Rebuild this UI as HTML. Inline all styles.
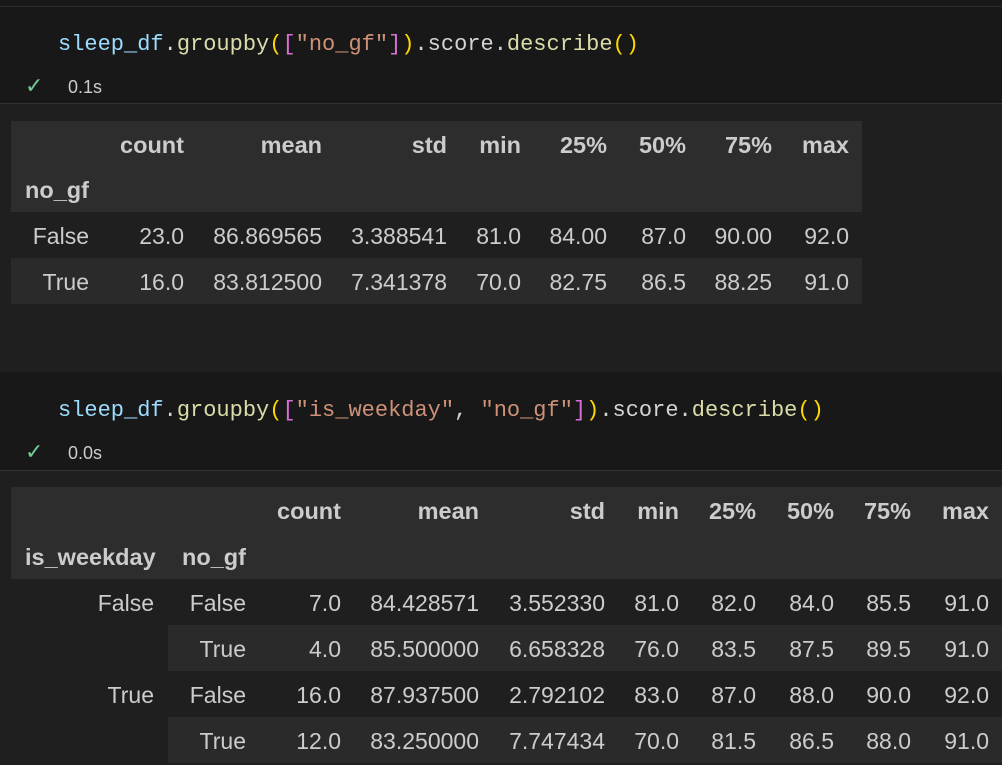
<!DOCTYPE html>
<html><head><meta charset="utf-8"><style>
*{margin:0;padding:0}
body{width:1002px;height:761px;background:#1f1f1f;position:relative;overflow:hidden;font-family:"Liberation Sans",sans-serif;color:#cccccc;font-size:23px}
.a{position:absolute;height:46px;line-height:48px;white-space:nowrap}
.b{font-weight:bold;font-size:23.5px}
.bg{position:absolute}
.code{position:absolute;font-family:"Liberation Mono",monospace;font-size:22px;white-space:pre;color:#d4d4d4}
.v{color:#9cdcfe}.f{color:#dcdcaa}.s{color:#ce9178}.y{color:#ffd700}.p{color:#da70d6}
.t{position:absolute;font-size:18px;color:#cccccc}
.ck{position:absolute;color:#73c991;font-size:22px}
</style></head><body>
<div class="bg" style="left:0;top:0;width:1002px;height:104px;background:#181818"></div>
<div class="bg" style="left:0;top:6px;width:1002px;height:1px;background:#2b2b2b"></div>
<div class="bg" style="left:0;top:103px;width:1002px;height:1px;background:#333"></div>
<div class="code" style="left:58px;top:32px"><span class="v">sleep_df</span>.<span class="f">groupby</span><span class="y">(</span><span class="p">[</span><span class="s">"no_gf"</span><span class="p">]</span><span class="y">)</span>.score.<span class="f">describe</span><span class="y">()</span></div>
<div class="ck" style="left:25px;top:73px">✓</div><div class="t" style="left:68px;top:77px">0.1s</div>

<div class="bg" style="left:11px;top:121px;width:851px;height:91px;background:#2d2d2d"></div>
<div class="bg" style="left:11px;top:258px;width:851px;height:46px;background:#2a2a2a"></div>
<div class="a b" style="right:818px;top:121px">count</div>
<div class="a b" style="right:680px;top:121px">mean</div>
<div class="a b" style="right:555px;top:121px">std</div>
<div class="a b" style="right:481px;top:121px">min</div>
<div class="a b" style="right:395px;top:121px">25%</div>
<div class="a b" style="right:316px;top:121px">50%</div>
<div class="a b" style="right:230px;top:121px">75%</div>
<div class="a b" style="right:153px;top:121px">max</div>
<div class="a b" style="left:25px;top:166px">no_gf</div>
<div class="a" style="right:913px;top:212px">False</div>
<div class="a" style="right:818px;top:212px">23.0</div>
<div class="a" style="right:680px;top:212px">86.869565</div>
<div class="a" style="right:555px;top:212px">3.388541</div>
<div class="a" style="right:481px;top:212px">81.0</div>
<div class="a" style="right:395px;top:212px">84.00</div>
<div class="a" style="right:316px;top:212px">87.0</div>
<div class="a" style="right:230px;top:212px">90.00</div>
<div class="a" style="right:153px;top:212px">92.0</div>
<div class="a" style="right:913px;top:258px">True</div>
<div class="a" style="right:818px;top:258px">16.0</div>
<div class="a" style="right:680px;top:258px">83.812500</div>
<div class="a" style="right:555px;top:258px">7.341378</div>
<div class="a" style="right:481px;top:258px">70.0</div>
<div class="a" style="right:395px;top:258px">82.75</div>
<div class="a" style="right:316px;top:258px">86.5</div>
<div class="a" style="right:230px;top:258px">88.25</div>
<div class="a" style="right:153px;top:258px">91.0</div>

<div class="bg" style="left:0;top:372px;width:1002px;height:98px;background:#181818"></div>
<div class="bg" style="left:0;top:470px;width:1002px;height:1px;background:#333"></div>
<div class="code" style="left:58px;top:398px"><span class="v">sleep_df</span>.<span class="f">groupby</span><span class="y">(</span><span class="p">[</span><span class="s">"is_weekday"</span>, <span class="s">"no_gf"</span><span class="p">]</span><span class="y">)</span>.score.<span class="f">describe</span><span class="y">()</span></div>
<div class="ck" style="left:25px;top:439px">✓</div><div class="t" style="left:68px;top:443px">0.0s</div>

<div class="bg" style="left:11px;top:487px;width:991px;height:92px;background:#2d2d2d"></div>
<div class="bg" style="left:168px;top:625px;width:834px;height:46px;background:#2a2a2a"></div>
<div class="bg" style="left:168px;top:717px;width:834px;height:46px;background:#2a2a2a"></div>
<div class="a b" style="right:661px;top:487px">count</div>
<div class="a b" style="right:523px;top:487px">mean</div>
<div class="a b" style="right:397px;top:487px">std</div>
<div class="a b" style="right:323px;top:487px">min</div>
<div class="a b" style="right:246px;top:487px">25%</div>
<div class="a b" style="right:168px;top:487px">50%</div>
<div class="a b" style="right:91px;top:487px">75%</div>
<div class="a b" style="right:13px;top:487px">max</div>
<div class="a b" style="left:25px;top:533px">is_weekday</div>
<div class="a b" style="left:182px;top:533px">no_gf</div>

<div class="a" style="right:848px;top:579px">False</div>
<div class="a" style="right:848px;top:671px">True</div>

<div class="a" style="right:756px;top:579px">False</div>
<div class="a" style="right:661px;top:579px">7.0</div>
<div class="a" style="right:523px;top:579px">84.428571</div>
<div class="a" style="right:397px;top:579px">3.552330</div>
<div class="a" style="right:323px;top:579px">81.0</div>
<div class="a" style="right:246px;top:579px">82.0</div>
<div class="a" style="right:168px;top:579px">84.0</div>
<div class="a" style="right:91px;top:579px">85.5</div>
<div class="a" style="right:13px;top:579px">91.0</div>

<div class="a" style="right:756px;top:625px">True</div>
<div class="a" style="right:661px;top:625px">4.0</div>
<div class="a" style="right:523px;top:625px">85.500000</div>
<div class="a" style="right:397px;top:625px">6.658328</div>
<div class="a" style="right:323px;top:625px">76.0</div>
<div class="a" style="right:246px;top:625px">83.5</div>
<div class="a" style="right:168px;top:625px">87.5</div>
<div class="a" style="right:91px;top:625px">89.5</div>
<div class="a" style="right:13px;top:625px">91.0</div>

<div class="a" style="right:756px;top:671px">False</div>
<div class="a" style="right:661px;top:671px">16.0</div>
<div class="a" style="right:523px;top:671px">87.937500</div>
<div class="a" style="right:397px;top:671px">2.792102</div>
<div class="a" style="right:323px;top:671px">83.0</div>
<div class="a" style="right:246px;top:671px">87.0</div>
<div class="a" style="right:168px;top:671px">88.0</div>
<div class="a" style="right:91px;top:671px">90.0</div>
<div class="a" style="right:13px;top:671px">92.0</div>

<div class="a" style="right:756px;top:717px">True</div>
<div class="a" style="right:661px;top:717px">12.0</div>
<div class="a" style="right:523px;top:717px">83.250000</div>
<div class="a" style="right:397px;top:717px">7.747434</div>
<div class="a" style="right:323px;top:717px">70.0</div>
<div class="a" style="right:246px;top:717px">81.5</div>
<div class="a" style="right:168px;top:717px">86.5</div>
<div class="a" style="right:91px;top:717px">88.0</div>
<div class="a" style="right:13px;top:717px">91.0</div>
</body></html>
